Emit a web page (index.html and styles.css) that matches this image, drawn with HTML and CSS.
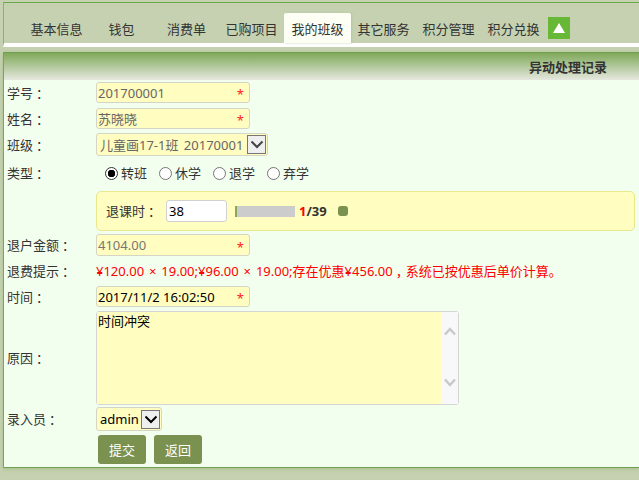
FILE: index.html
```html
<!DOCTYPE html>
<html lang="zh">
<head>
<meta charset="utf-8">
<title>异动处理记录</title>
<link rel="stylesheet" href="styles.css">
</head>
<body>
<nav class="nav">
  <ul class="tabs">
    <li class="tab">基本信息</li>
    <li class="tab">钱包</li>
    <li class="tab">消费单</li>
    <li class="tab">已购项目</li>
    <li class="tab active">我的班级</li>
    <li class="tab">其它服务</li>
    <li class="tab">积分管理</li>
    <li class="tab">积分兑换</li>
    <li class="toggle"><svg width="12" height="10" viewBox="0 0 12 10"><path d="M6 0 12 10H0Z" fill="#fff"/></svg></li>
  </ul>
</nav>
<main class="panel">
  <header class="panel-head">异动处理记录</header>
  <form class="form">
    <div class="row r-id"><span class="label">学号<i class="punct">：</i></span><span class="field muted">201700001<i class="req">*</i></span></div>
    <div class="row r-name"><span class="label">姓名<i class="punct">：</i></span><span class="field muted">苏晓晓<i class="req">*</i></span></div>
    <div class="row r-class"><span class="label">班级<i class="punct">：</i></span><span class="select wide muted"><span class="select-text">儿童画17-1班 20170001</span><span class="arrow"><svg width="14" height="9" viewBox="0 0 14 9"><path d="M1.500 1.500 7 7l5.500-5.500" fill="none" stroke="#444" stroke-width="2"/></svg></span></span></div>
    <div class="row r-type"><span class="label">类型<i class="punct">：</i></span>
      <span class="radios">
        <span class="radio on"><i class="dot"></i>转班</span>
        <span class="radio"><i class="dot"></i>休学</span>
        <span class="radio"><i class="dot"></i>退学</span>
        <span class="radio"><i class="dot"></i>弃学</span>
      </span>
    </div>
    <div class="row r-box"><span class="label"></span>
      <div class="box">
        <span class="box-label">退课时<i class="punct">：</i></span>
        <span class="box-input">38</span>
        <span class="slider"><i class="fill"></i></span>
        <b class="count"><em>1</em>/39</b>
        <i class="stop"></i>
      </div>
    </div>
    <div class="row r-money"><span class="label">退户金额<i class="punct">：</i></span><span class="field light">4104.00<i class="req">*</i></span></div>
    <div class="row r-tip"><span class="label">退费提示<i class="punct">：</i></span><span class="tip">¥120.00 <i class="times">×</i> 19.00;¥96.00 <i class="times">×</i> 19.00;存在优惠¥456.00<i class="punct">，</i>系统已按优惠后单价计算。</span></div>
    <div class="row r-time"><span class="label">时间<i class="punct">：</i></span><span class="field dark">2017/11/2 16:02:50<i class="req">*</i></span></div>
    <div class="row r-reason"><span class="label">原因<i class="punct">：</i></span>
      <div class="area"><div class="area-text">时间冲突</div>
        <div class="scroll">
          <svg width="12" height="9" viewBox="0 0 12 9"><path d="M1 7.500 6 2l5 5.500" fill="none" stroke="#c8c8c8" stroke-width="2.500"/></svg>
          <svg width="12" height="9" viewBox="0 0 12 9"><path d="M1 1.500 6 7l5-5.500" fill="none" stroke="#c8c8c8" stroke-width="2.500"/></svg>
        </div>
      </div>
    </div>
    <div class="row r-user"><span class="label">录入员<i class="punct">：</i></span><span class="select dark"><span class="select-text">admin</span><span class="arrow"><svg width="14" height="9" viewBox="0 0 14 9"><path d="M1.500 1.500 7 7l5.500-5.500" fill="none" stroke="#000" stroke-width="2"/></svg></span></span></div>
    <div class="row r-btn"><span class="label"></span><span class="btns"><button type="button" class="btn">提交</button><button type="button" class="btn">返回</button></span></div>
  </form>
</main>
</body>
</html>
```
FILE: styles.css
```css
html, body { margin: 0; height: 480px; overflow: hidden; }
body {
  background: #c5d1b0;
  font: 13px/18px "Noto Sans", "Noto Sans CJK SC", sans-serif;
  color: #333;
  padding: 2px 0 0 3px;
  box-sizing: border-box;
}
i, em { font-style: normal; }
.punct { padding-left: 3px; letter-spacing: -3px; }
.times { padding: 0 1.500px; }
.nav {
  border-top: 1px solid #6aa84a;
  border-left: 1px solid #8eb36a;
  box-sizing: border-box;
  border-bottom: 4px solid #fff;
  height: 45px;
}
.tabs {
  list-style: none;
  margin: 0;
  padding: 10px 0 0 20px;
  display: flex;
  align-items: flex-start;
  height: 30px;
  box-sizing: content-box;
}
.tab {
  width: 65px;
  height: 30px;
  line-height: 32px;
  text-align: center;
  flex: none;
}
.tab.active {
  width: 67px;
  background: #fdfff4;
  border-radius: 2px 2px 0 0;
  box-shadow: 1px 0 2px #b5c79f;
  line-height: 33px;
}
.toggle {
  width: 22px;
  height: 22px;
  background: #67b836;
  margin: 4px 0 0 2px;
  display: flex;
  align-items: center;
  justify-content: center;
}
.panel {
  margin-top: 5px;
  height: 416px;
  border-top: 1px solid #6f9f50;
  border-left: 1px solid #7ea35c;
  border-bottom: 1px solid #6f9f50;
  box-sizing: border-box;
  background: #f3ffee;
  box-shadow: 0 1px 4px #a9bd8a;
}
.panel-head {
  height: 27px;
  background: linear-gradient(#7fa95a, #e6e8df);
  font-weight: 700;
  line-height: 28px;
  text-align: right;
  padding-right: 32px;
}
.form { display: block; padding-left: 3px; }
.row { display: flex; align-items: center; }
.label { width: 89px; flex: none; }
.r-id { height: 21px; margin-top: 2px; }
.r-name { height: 21px; margin-top: 5px; }
.r-class { height: 23px; margin-top: 4px; }
.r-type { height: 18px; margin-top: 8px; }
.r-box { height: 40px; margin-top: 9px; }
.r-money { height: 22px; margin-top: 3px; }
.r-tip { height: 18px; margin-top: 6px; }
.r-time { height: 21px; margin-top: 6px; }
.r-reason { height: 94px; margin-top: 4px; }
.r-user { height: 24px; margin-top: 2px; }
.r-btn { height: 29px; margin-top: 4px; }
.field {
  width: 154px;
  height: 100%;
  box-sizing: border-box;
  background: #fffdc0;
  border: 1px solid #d5d5c5;
  border-radius: 3px;
  padding: 0 5px 0 1px;
  display: flex;
  align-items: center;
  justify-content: space-between;
}
.muted { color: #666; }
.light { color: #777; }
.dark { color: #000; }
.req { color: #f22; font-size: 13px; font-weight: 400; line-height: 14px; padding-top: 3px; }
.select {
  height: 100%;
  box-sizing: border-box;
  background: #fffdc0;
  border: 1px solid #d5d5c5;
  border-radius: 3px;
  padding: 0 1px 0 3px;
  display: inline-flex;
  align-items: center;
  white-space: nowrap;
}
.select.wide { width: 172px; word-spacing: 2px; }
.select.dark { width: 66px; }
.select-text { flex: 1; }
.arrow {
  width: 19px;
  height: 19px;
  flex: none;
  box-sizing: border-box;
  background: #efefef;
  border: 1px solid #767676;
  display: flex;
  align-items: center;
  justify-content: center;
}
.radios { display: flex; margin-left: 9px; gap: 12px; }
.radio { display: flex; align-items: center; color: #333; }
.dot {
  width: 13px;
  height: 13px;
  box-sizing: border-box;
  border: 1px solid #767676;
  border-radius: 50%;
  background: #fff;
  margin-right: 3px;
}
.radio.on .dot { border-color: #333; background: radial-gradient(circle, #000 0 3.500px, #fff 4px); }
.box {
  width: 539px;
  height: 100%;
  box-sizing: border-box;
  background: #fffdc0;
  border: 1px solid #e8e88c;
  border-radius: 5px;
  display: flex;
  align-items: center;
  padding-left: 9px;
}
.box-label { width: 60px; flex: none; }
.box-input {
  width: 61px;
  height: 22px;
  box-sizing: border-box;
  background: #fff;
  border: 1px solid #d0d0d0;
  border-radius: 3px;
  color: #000;
  padding: 0 2px;
  line-height: 20px;
  margin-right: 8px;
}
.slider { width: 60px; height: 11px; background: #ccc; display: block; margin-right: 4px; }
.fill { display: block; width: 2px; height: 100%; background: #8aa85c; }
.count { color: #333; font-weight: 700; width: 39px; flex: none; }
.count em { color: #f00; }
.stop { width: 10px; height: 10px; background: #7a9150; border-radius: 3px; }
.tip { color: #f00; white-space: nowrap; }
.area {
  width: 363px;
  height: 100%;
  box-sizing: border-box;
  border: 1px solid #d5d5d5;
  border-radius: 3px;
  display: flex;
}
.area-text { flex: 1; background: #fffdc0; color: #000; padding: 0 1px; }
.scroll {
  width: 17px;
  background: #f8f8f8;
  display: flex;
  flex-direction: column;
  justify-content: space-between;
  align-items: center;
  padding: 15px 0 17px;
  box-sizing: border-box;
}
.btns { display: flex; gap: 8px; margin-left: 2px; }
.btn {
  width: 48px;
  height: 29px;
  border: 0;
  padding: 0;
  border-radius: 3px;
  background: #7a9150;
  color: #fff;
  font: inherit;
}
```
